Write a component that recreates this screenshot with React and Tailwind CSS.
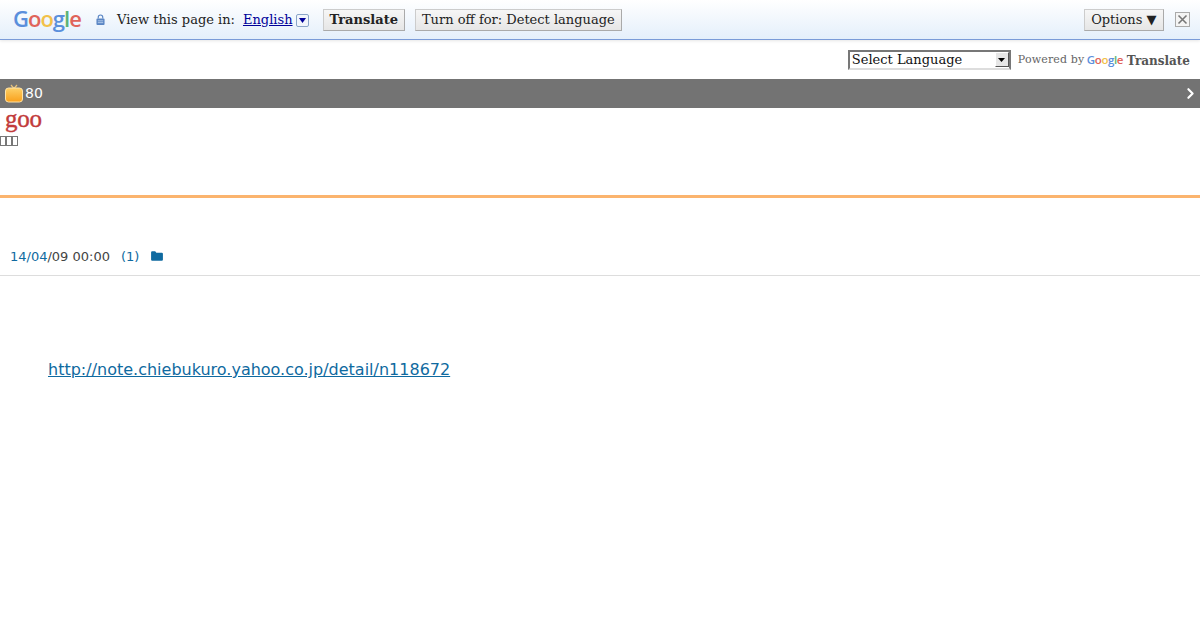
import { ChevronRight } from 'lucide-react';

const serif = "font-['DejaVu_Serif',serif]";

const GoogleWord = ({ className }) => (
  <span className={`inline-block font-['Open_Sans',sans-serif] ${className}`}>
    <span className="text-[#5a8fdc]">G</span>
    <span className="text-[#e0645a]">o</span>
    <span className="text-[#f2c14a]">o</span>
    <span className="text-[#5a8fdc]">g</span>
    <span className="text-[#5cb377]">l</span>
    <span className="text-[#e0645a]">e</span>
  </span>
);

const BarButton = ({ children, className = '' }) => (
  <button className={`h-[22px] px-[6px] text-[13px] leading-none text-[#222] bg-gradient-to-b from-[#f6f6f6] to-[#e6e6e6] border border-[#ccc] border-b-[#aaa] border-r-[#aaa] ${className}`}>
    {children}
  </button>
);

const TranslateBar = () => (
  <div className={`h-10 flex items-center bg-gradient-to-b from-white to-[#e4effb] border-b border-[#7a9bd8] shadow-[0_1px_3px_rgba(0,0,0,0.1)] relative ${serif}`}>
    <GoogleWord className="ml-[13px] w-[68px] text-[22px] leading-none font-semibold tracking-[-1px] -mt-[3px]" />
    <svg className="ml-[15px] w-[9px] h-[11px]" viewBox="0 0 10 12">
      <path d="M2.5 5V3.5a2.5 2.5 0 0 1 5 0V5" fill="none" stroke="#5b86c4" strokeWidth="1.3" />
      <rect x="0.5" y="5" width="9" height="7" rx="1" fill="#5b86c4" />
      <path d="M2 7.5h6M2 9.5h6" stroke="#cfe0f5" strokeWidth="0.8" />
    </svg>
    <span className="ml-[12px] text-[13px] text-[#222]">View this page in:</span>
    <a className="ml-[8px] text-[13px] text-[#000099] underline">English</a>
    <span className="ml-[3px] w-[13px] h-[13px] mt-[2px] flex items-center justify-center border border-[#8aa5c8] rounded-[2px] bg-[#f2f6fc]">
      <svg className="w-[7px] h-[5px]" viewBox="0 0 7 5"><path d="M0 0h7L3.5 5z" fill="#000099" /></svg>
    </span>
    <BarButton className="ml-[14px] font-bold">Translate</BarButton>
    <BarButton className="ml-[10px]">Turn off for: Detect language</BarButton>
    <BarButton className="ml-auto !px-[6.5px]">Options ▼</BarButton>
    <button className="ml-[11px] mr-[10px] w-[15px] h-[15px] flex items-center justify-center border border-[#aaa] bg-[#f4f4f4]">
      <svg className="w-[11px] h-[11px]" viewBox="0 0 11 11"><path d="M1.5 1.5l8 8M9.5 1.5l-8 8" stroke="#777" strokeWidth="1.6" /></svg>
    </button>
  </div>
);

const LanguageRow = () => (
  <div className={`h-[39px] flex items-center justify-end pr-[10px] ${serif}`}>
    <div className="w-[163px] h-[20px] flex items-center justify-between border-2 border-t-[#777] border-l-[#777] border-r-[#777] border-b-[#ddd] bg-white">
      <span className="pl-[2px] text-[13px] text-[#111]">Select Language</span>
      <span className="w-[14px] h-[15px] flex items-center justify-center bg-[#e6e6e6] border border-r-[#555] border-b-[#555] border-t-white border-l-white">
        <svg className="w-[7px] h-[4px]" viewBox="0 0 7 4"><path d="M0 0h7L3.5 4z" fill="#000" /></svg>
      </span>
    </div>
    <span className="ml-[7px] mt-[2px] w-[66px] text-[11px] text-[#666] tracking-[0.15px] whitespace-nowrap">Powered by</span>
    <GoogleWord className="ml-[3px] w-[36px] mt-[1px] text-[11.5px] font-semibold tracking-[-0.4px]" />
    <span className="ml-[4px] mt-[2px] text-[12px] font-bold text-[#555]">Translate</span>
  </div>
);

const TopicBar = () => (
  <div className="h-[29px] flex items-center justify-between bg-[#737373] text-white pl-[5px] pr-[1px]">
    <div className="flex items-center -mt-[1px]">
      <svg className="w-[18px] h-[19px]" viewBox="0 0 18 19">
        <defs>
          <linearGradient id="tv" x1="0" y1="0" x2="0" y2="1">
            <stop offset="0" stopColor="#fdd067" />
            <stop offset="1" stopColor="#f9a01b" />
          </linearGradient>
        </defs>
        <path d="M6 1l3 3.5L12 1" fill="none" stroke="#e8c27a" strokeWidth="1.2" />
        <rect x="0.5" y="4" width="17" height="14" rx="3" fill="url(#tv)" stroke="#ffe3a8" />
      </svg>
      <span className="ml-[2px] text-sm">80</span>
    </div>
    <ChevronRight className="w-[17px] h-[17px]" strokeWidth={3} />
  </div>
);

const BlogHeader = () => (
  <div className="h-[87px] border-b-[3px] border-[#fbb46e] box-content">
    <div className="pl-[5px] pt-[1px] h-[25px] font-['Liberation_Serif',serif] text-[25px] leading-[20px] tracking-[-0.2px] text-[#c23b3b] [-webkit-text-stroke:0.4px_#c23b3b]">goo</div>
    <div className="flex mt-[3px] h-[12px]">
      <span className="w-[6px] h-[10px] border border-[#777]" />
      <span className="w-[6px] h-[10px] border border-[#777]" />
      <span className="w-[6px] h-[10px] border border-[#777]" />
    </div>
  </div>
);

export default function App() {
  return (
    <div className="min-h-[630px] bg-white font-['DejaVu_Sans',sans-serif] overflow-hidden">
      <TranslateBar />
      <LanguageRow />
      <TopicBar />
      <BlogHeader />

      {/* Entry meta */}
      <div className="mt-[48px] h-[30px] flex items-start pt-[1px] pl-[10px] border-b border-[#ddd] text-[13px] leading-[20px] text-[#444]">
        <span><a className="text-[#0f6aa0]">14/04</a>/09 00:00</span>
        <a className="ml-[11px] text-[#0f6aa0]">(1)</a>
        <svg className="ml-[12px] mt-[4px] w-[12px] h-[10px]" viewBox="0 0 13 11">
          <path d="M0 1.5A1.2 1.2 0 0 1 1.2.3h3.3l1.3 1.5h6a1.2 1.2 0 0 1 1.2 1.2v6.5a1.2 1.2 0 0 1-1.2 1.2H1.2A1.2 1.2 0 0 1 0 9.5z" fill="#0f6aa0" />
        </svg>
      </div>

      {/* Entry body */}
      <div className="pl-[48px] pt-[82px]">
        <a className="text-[16px] leading-[24px] text-[#0f6aa0] underline">http://note.chiebukuro.yahoo.co.jp/detail/n118672</a>
      </div>
    </div>
  );
}
